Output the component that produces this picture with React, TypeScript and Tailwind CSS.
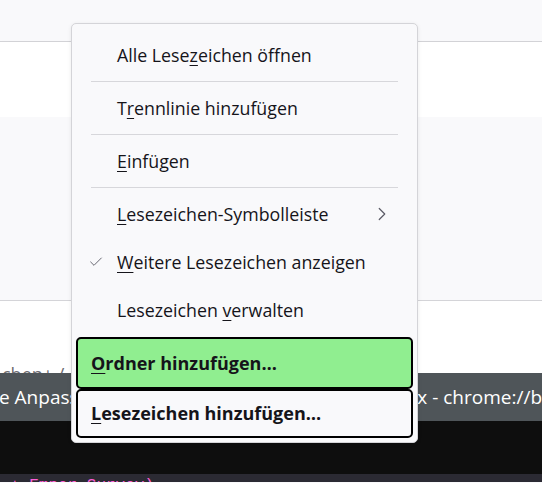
import { ChevronRight, Check } from "lucide-react";

// Firefox bookmarks context menu over a page background.

const font = { fontFamily: '"Open Sans", "Noto Sans", sans-serif' };

function Key({ children }: { children: string }) {
  return <span className="underline decoration-1 underline-offset-[3px]">{children}</span>;
}

function Item({ children, right, check }: { children: React.ReactNode; right?: React.ReactNode; check?: boolean }) {
  return (
    <div className="relative flex h-[48px] items-center pl-[45px] pr-[24px] text-[17.8px] text-[#15141a]">
      {check && <Check className="absolute left-[16px] h-[16px] w-[16px] text-[#5b5b66]" strokeWidth={1.4} />}
      <span className="flex-1">{children}</span>
      {right}
    </div>
  );
}

function Sep() {
  return <div className="mx-[19px] my-[2px] h-px bg-[#d7d7db]" />;
}

export default function App() {
  return (
    <div className="relative h-[483px] w-[542px] overflow-hidden bg-[#f9f9fb]" style={font}>
      <div className="h-[42px] border-b border-[#d4d4d8] bg-[#f9f9fb]" />
      <div className="h-[75px] bg-white shadow-[0_3px_8px_rgba(0,0,0,0.04)]" />
      <div className="h-[184px] border-b border-[#d4d4d8] bg-[#f9f9fb]" />
      <div className="flex h-[72px] items-end overflow-hidden bg-white">
        <div className="-mb-[12px] pl-[2px] text-[18px] leading-[22px] text-[#6b6b70]">chen+ /</div>
      </div>
      <div className="flex h-[48px] items-center justify-between bg-[#4f5559] text-[19px] text-white">
        <span className="-ml-[1px]">e Anpassungen</span>
        <span>x - chrome://b</span>
      </div>
      <div className="h-[53px] bg-[#0e0e0e]" />
      <div className="h-[8px] overflow-hidden bg-[#2b2a33]">
        <div className="pl-[10px] pt-[3px] font-mono text-[16px] leading-[18px] text-[#ff5fd7]">+ Emper Survey)</div>
      </div>

      <div className="absolute left-[71px] top-[23px] flex h-[420px] w-[347px] flex-col rounded-[5px] border border-[#d4d4d8] bg-[#f9f9fb] pt-[7px] shadow-[0_1px_4px_rgba(0,0,0,0.08)]">
        <Item>
          Alle Lese<Key>z</Key>eichen öffnen
        </Item>
        <Sep />
        <Item>
          T<Key>r</Key>ennlinie hinzufügen
        </Item>
        <Sep />
        <Item>
          <Key>E</Key>infügen
        </Item>
        <Sep />
        <Item right={<ChevronRight className="h-[22px] w-[22px] text-[#5b5b66]" strokeWidth={1.3} />}>
          <Key>L</Key>esezeichen-Symbolleiste
        </Item>
        <Item check>
          <Key>W</Key>eitere Lesezeichen anzeigen
        </Item>
        <Item>
          Lesezeichen <Key>v</Key>erwalten
        </Item>
        <div className="mx-[4px] mt-[3px] flex h-[52px] items-center rounded-[5px] border-2 border-black bg-[#90ee90] pl-[13px] text-[18px] font-bold text-[#15141a]">
          <span>
            <Key>O</Key>rdner hinzufügen…
          </span>
        </div>
        <div className="mx-[4px] flex h-[49px] items-center rounded-[5px] border-2 border-black bg-[#f9f9fb] pl-[13px] text-[18px] font-bold text-[#15141a]">
          <span>
            <Key>L</Key>esezeichen hinzufügen…
          </span>
        </div>
      </div>
    </div>
  );
}
